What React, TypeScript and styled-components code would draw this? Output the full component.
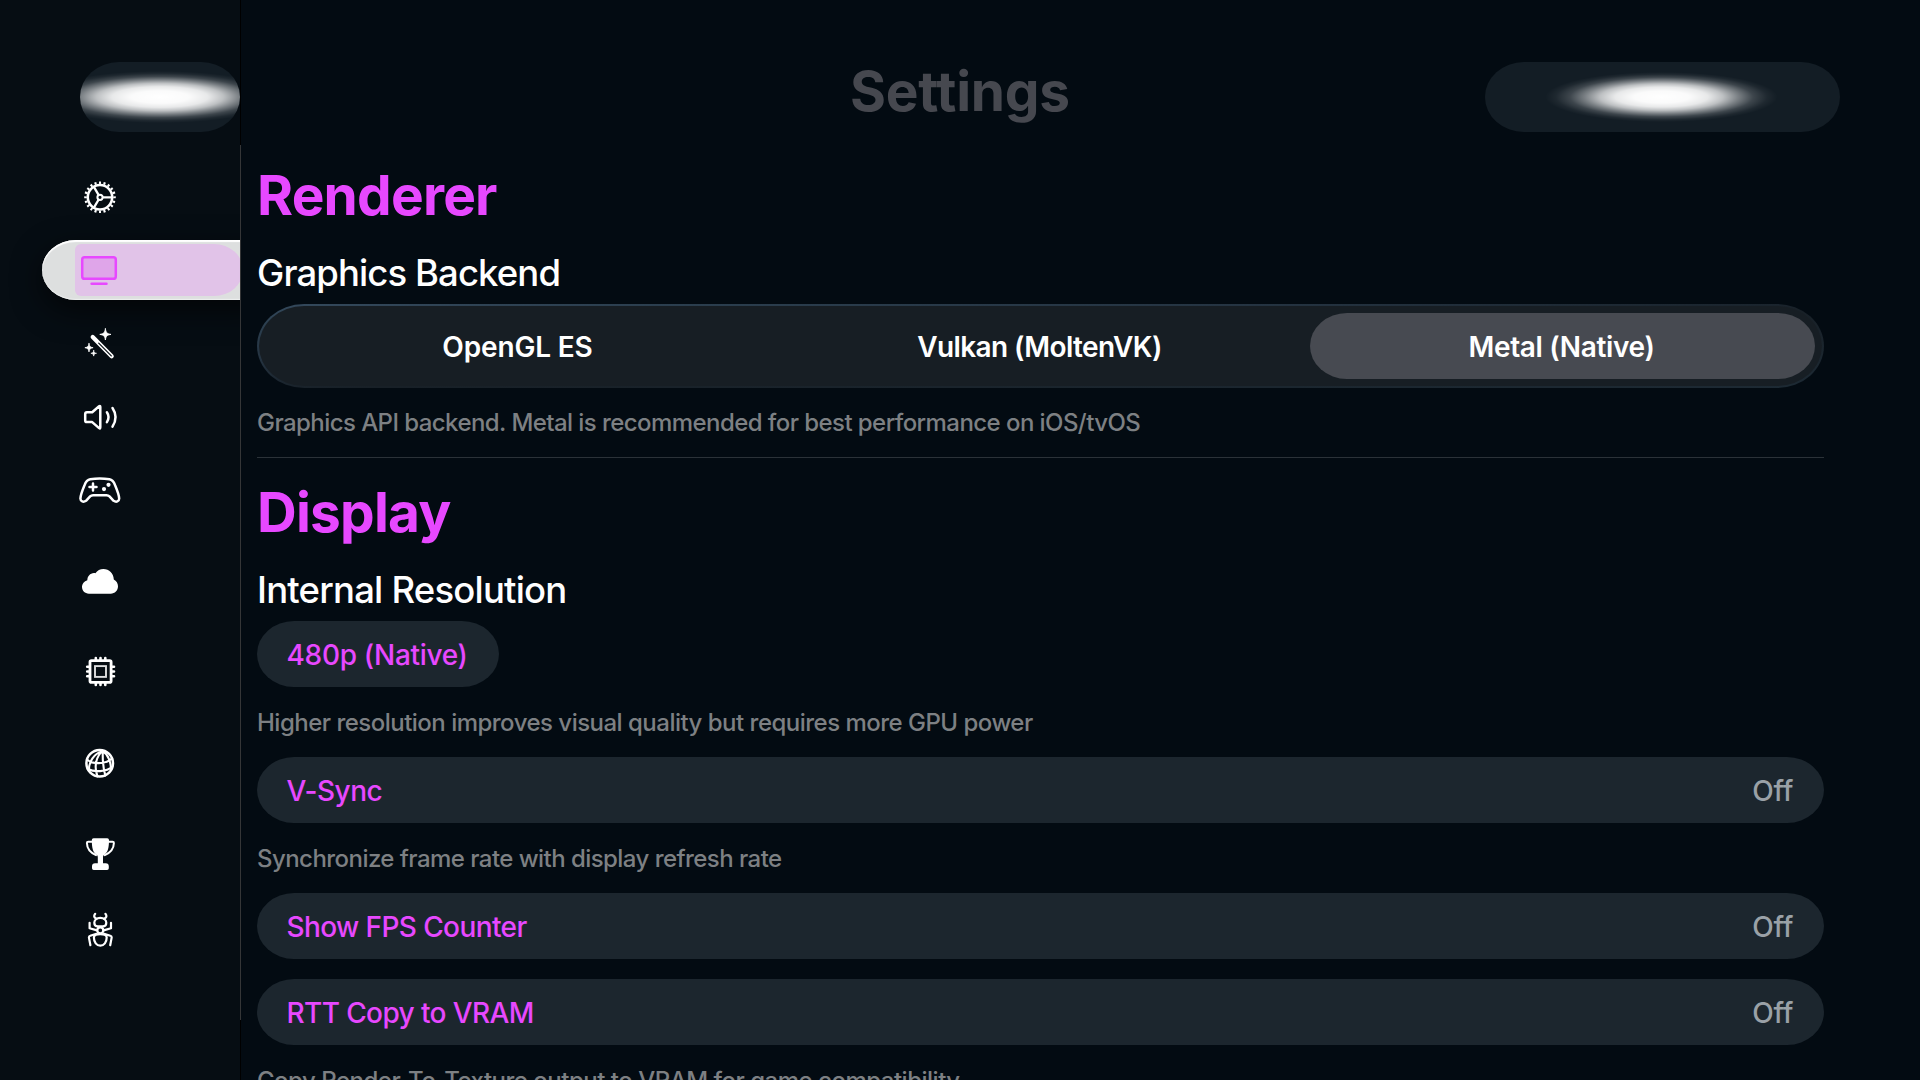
import React from 'react';
import styled, { createGlobalStyle } from 'styled-components';

const ACCENT = '#e748ff';

const GlobalStyle = createGlobalStyle`
  * { box-sizing: border-box; }
  html, body { margin: 0; padding: 0; background: #030b12; overflow: hidden; }
  body { font-family: Inter, "Liberation Sans", sans-serif; color: #fff; }
`;

const Screen = styled.div`
  display: flex;
  width: 1920px;
  height: 1080px;
  overflow: hidden;
  background: #030b12;
`;

const Sidebar = styled.aside`
  flex: none;
  width: 240px;
  height: 100%;
  overflow: hidden;
  background: #060d13;
`;

const SidebarHeader = styled.div`
  height: 167px;
  padding: 62px 0 0 80px;
`;

const GlassPill = styled.div<{ $width: number; $glowX: number; $glowY: number; $shift: number }>`
  flex: none;
  width: ${(p) => p.$width}px;
  height: 70px;
  border-radius: 39px / 35px;
  background:
    radial-gradient(
      ${(p) => p.$glowX}px ${(p) => p.$glowY}px at calc(50% + ${(p) => p.$shift}px) 50%,
      #fff 0%,
      rgba(255, 255, 255, 0.98) 24%,
      rgba(255, 255, 255, 0.9) 40%,
      rgba(255, 255, 255, 0.72) 53%,
      rgba(255, 255, 255, 0.44) 66%,
      rgba(255, 255, 255, 0.18) 79%,
      rgba(255, 255, 255, 0.05) 91%,
      rgba(255, 255, 255, 0) 100%
    ),
    #131d25;
`;

const Nav = styled.nav`
  display: flex;
  flex-direction: column;
`;

const NavItem = styled.div<{ $gap: number }>`
  display: flex;
  align-items: center;
  height: 60px;
  margin-top: ${(p) => p.$gap}px;
  padding-left: 76px;
`;

const SelectedNavItem = styled.div<{ $gap: number }>`
  display: flex;
  height: 60px;
  width: 240px;
  margin-top: ${(p) => p.$gap}px;
  margin-left: 42px;
  padding: 4px 0 4px 33px;
  border-radius: 34px / 30px;
  background: #dddfdf;
  box-shadow: 0 10px 30px rgba(0, 0, 0, 0.65), inset 0 2px 1px #fff, inset 0 -1px 1px #eef0f0;
`;

const SelectedFill = styled.div`
  display: flex;
  align-items: center;
  width: 168px;
  height: 52px;
  padding-left: 1px;
  border-radius: 6px 29px 29px 6px / 6px 26px 26px 6px;
  background: #e1c3e8;
`;

const Glyph = styled.svg`
  flex: none;
  width: 48px;
  height: 60px;
  fill: none;
  stroke: #fff;
  stroke-width: 2.5;
  stroke-linecap: round;
  stroke-linejoin: round;
`;

const SidebarDivider = styled.div`
  flex: none;
  width: 1px;
  height: 100%;
  background: linear-gradient(#000 0 145px, #353637 145px 1020px, #000 1020px);
`;

const Main = styled.main`
  flex: none;
  width: 1679px;
  height: 100%;
  overflow: hidden;
`;

const Header = styled.header`
  display: flex;
  align-items: flex-start;
  justify-content: space-between;
  height: 165px;
  padding: 62px 80px 0 609px;
`;

const PageTitle = styled.h1`
  margin: -1px 0 0;
  font-size: 55px;
  line-height: 60px;
  font-weight: 700;
  letter-spacing: -0.25px;
  color: #46484f;
`;

const Content = styled.div`
  display: flex;
  flex-direction: column;
  align-items: flex-start;
  width: 1583px;
  padding-left: 16px;
`;

const SectionTitle = styled.h2`
  margin: 0 0 26px;
  font-size: 55px;
  line-height: 60px;
  font-weight: 700;
  letter-spacing: -0.8px;
  color: ${ACCENT};
`;

const FieldTitle = styled.h3<{ $tracking: number }>`
  margin: 0 0 9px;
  font-size: 36.5px;
  line-height: 44px;
  font-weight: 500;
  letter-spacing: ${(p) => p.$tracking}px;
`;

const Segmented = styled.div`
  display: grid;
  grid-template-columns: repeat(3, 1fr);
  gap: 17px;
  width: 100%;
  height: 84px;
  padding: 7px 7px;
  margin-bottom: 20px;
  border: 2px solid transparent;
  border-radius: 47px / 42px;
  background:
    linear-gradient(#171e24, #171e24) padding-box,
    linear-gradient(to bottom right, #34495c 0%, #2b3e4e 14%, #253442 32%, #1a242d 49%, #182027 53%, #1d2a34 100%) border-box;
`;

const Segment = styled.div<{ $selected?: boolean; $tracking: number }>`
  display: flex;
  align-items: center;
  justify-content: center;
  padding: 1px 2px 0 0;
  border-radius: 37px / 33px;
  background: ${(p) => (p.$selected ? '#474a51' : 'transparent')};
  font-size: 28px;
  font-weight: 600;
  letter-spacing: ${(p) => p.$tracking}px;
  white-space: nowrap;
`;

const Caption = styled.p<{ $tracking: number }>`
  margin: 0 0 19px;
  font-size: 24px;
  line-height: 30px;
  font-weight: 500;
  letter-spacing: ${(p) => p.$tracking}px;
  color: #7d8083;
  white-space: nowrap;
`;

const Separator = styled.div`
  width: 100%;
  height: 1px;
  margin-bottom: 24px;
  background: #2b3238;
`;

const Control = styled.div<{ $wide?: boolean; $captioned?: boolean }>`
  display: flex;
  flex: none;
  align-items: center;
  justify-content: space-between;
  width: ${(p) => (p.$wide ? '100%' : '242px')};
  height: 66px;
  padding: 1px 31px 0 29.5px;
  margin-bottom: ${(p) => (p.$captioned ? 21 : 20)}px;
  border-radius: 37px / 33px;
  background: #1c262e;
`;

const ControlLabel = styled.span<{ $tracking: number }>`
  font-size: 28px;
  font-weight: 500;
  letter-spacing: ${(p) => p.$tracking}px;
  color: ${ACCENT};
  white-space: nowrap;
`;

const ControlValue = styled.span`
  font-size: 28px;
  font-weight: 500;
  letter-spacing: -0.3px;
  color: #9aa1a7;
`;

const SolidShape = styled.g`
  fill: #fff;
  stroke: none;
`;

const GearIcon = () => (
  <Glyph viewBox="0 0 48 60">
    <circle cx="24" cy="30.3" r="12.2" strokeWidth="2.5" />
    <circle cx="24" cy="30.3" r="14.5" pathLength="40" strokeDasharray="0.9 1.1" strokeDashoffset="0.45" strokeLinecap="butt" strokeWidth="2.6" />
    <circle cx="24" cy="30.3" r="2.6" strokeWidth="2" />
    <path d="M27 30.3H36M22.4 27.6 17.9 19.9M22.4 33 17.9 40.7" strokeWidth="2.3" />
  </Glyph>
);

const DisplayIcon = () => (
  <Glyph viewBox="0 0 48 60">
    <g stroke={ACCENT}>
      <rect x="6.2" y="17.3" width="33.6" height="21.5" rx="2.4" fill="#dfa5e9" />
      <path d="M15.6 43.8H30.5" />
    </g>
  </Glyph>
);

const WandIcon = () => (
  <Glyph viewBox="0 0 48 60">
    <path d="M16.7 22 35.7 41.3" strokeWidth="4.2" />
    <path d="M22.7 28.1 35.3 40.9" stroke="#060d13" strokeWidth="1.2" />
    <SolidShape>
      <path d="M29.4 13.8C29.9 17.6 30.9 18.8 35 19.4 30.9 20 29.9 21.2 29.4 25 28.9 21.2 27.9 20 23.8 19.4 27.9 18.8 28.9 17.6 29.4 13.8Z" strokeWidth="0.9" stroke="#fff" />
      <path d="M13 28.5C13.4 31.4 14.1 32.2 17.1 32.7 14.1 33.2 13.4 34 13 36.9 12.6 34 11.9 33.2 8.9 32.7 11.9 32.2 12.6 31.4 13 28.5Z" strokeWidth="0.8" stroke="#fff" />
      <path d="M17.7 35.5C18 37.5 18.5 38 20.5 38.3 18.5 38.6 18 39.1 17.7 41.1 17.4 39.1 16.9 38.6 14.9 38.3 16.9 38 17.4 37.5 17.7 35.5Z" strokeWidth="0.7" stroke="#fff" />
    </SolidShape>
  </Glyph>
);

const SpeakerIcon = () => (
  <Glyph viewBox="0 0 48 60">
    <path d="M10.9 25.2H16.2L23.1 19.2Q24.3 18.4 24.3 20V40.3Q24.3 42 23.1 41.1L16.2 35.1H10.9Q9.2 35.1 9.2 33.4V26.9Q9.2 25.2 10.9 25.2Z" />
    <path d="M30.9 25.2Q34.2 30.1 30.9 35.1M36.5 21Q42.6 30.1 36.5 39.6" />
  </Glyph>
);

const GamepadIcon = () => (
  <Glyph viewBox="0 0 48 60">
    <path d="M14.2 19.3Q23.8 17.5 33.4 19.3C37 19.9 37.9 22 39.1 25.2 41.1 30 43.1 35 43.2 38.5 43.1 41.5 40.3 42.5 37.6 40.8L33.5 36.4C32.6 35.5 32 35.2 30.5 35.2H17.1C15.6 35.2 15 35.5 14.1 36.4L10 40.8C7.3 42.5 4.5 41.5 4.4 38.5 4.5 35 6.5 30 8.5 25.2 9.7 22 10.6 19.9 14.2 19.3Z" />
    <path d="M17 23.6V30.6M13.5 27.1H20.5" />
    <SolidShape>
      <circle cx="32.5" cy="24.8" r="2.1" />
      <circle cx="28" cy="29.1" r="2.1" />
    </SolidShape>
  </Glyph>
);

const CloudIcon = () => (
  <Glyph viewBox="0 0 48 60">
    <SolidShape>
      <path d="M12.9 41.7C8.9 41.7 6 38.8 6 35.1 6 31.7 8.3 29 11.3 28.2 11.5 24.1 14 21.2 18 21 18.6 21 19 21.1 19.4 21.2 21.3 18.5 24.2 17 27.4 17 33.2 17 37.6 21.4 37.8 27.4 40.4 28.6 42 31.2 42 34.3 42 38.4 38.9 41.7 34.7 41.7Z" />
    </SolidShape>
  </Glyph>
);

const ChipIcon = () => (
  <Glyph viewBox="0 0 48 60">
    <rect x="14" y="18.6" width="21.1" height="21.7" rx="1.4" strokeWidth="2.8" />
    <rect x="19" y="24.1" width="11" height="10.8" strokeWidth="1.9" strokeLinejoin="miter" stroke="#dfe0e1" />
    <path d="M19.8 16V18M24.5 16V18M29.3 16V18M19.8 41V43M24.5 41V43M29.3 41V43M11.2 24.7H13M11.2 29.5H13M11.2 34.3H13M36 24.7H38M36 29.5H38M36 34.3H38" strokeWidth="2.6" />
  </Glyph>
);

const GlobeIcon = () => (
  <Glyph viewBox="0 0 48 60">
    <circle cx="23.7" cy="30.3" r="13.3" />
    <path
      strokeWidth="2.1"
      d="M26 18.5C18 20.5 12.5 29 13 37.8M26.3 18.5C20.5 23 17.5 33 21.5 43.3M26.8 18.5C26.5 26 27.5 36 29.3 42.5M27.3 18.5C31.5 21 35 29 35 36M11 26.5C16 31.5 29.5 31.5 36 25.5M11.8 36C18 39.3 30.5 39 36.3 33.8"
    />
  </Glyph>
);

const TrophyIcon = () => (
  <Glyph viewBox="0 0 48 60">
    <SolidShape>
      <path d="M17.6 14.3H31.2Q33 14.3 33 16C33 24 31.8 28.3 28.3 30.8 27.2 31.6 27 32.5 27 33.8V39.2H29.7Q32.8 39.2 32.8 42.3V44.3Q32.8 46 31.1 46H17.7Q16 46 16 44.3V42.3Q16 39.2 19.1 39.2H21.8V33.8C21.8 32.5 21.6 31.6 20.5 30.8 17 28.3 15.8 24 15.8 16Q15.8 14.3 17.6 14.3Z" />
    </SolidShape>
    <path strokeWidth="2" d="M16.5 17.8H12.2Q10.9 17.8 10.9 19.1C11 24.5 14.5 28.8 20 31.2M32.3 17.8H36.6Q37.9 17.8 37.9 19.1C37.8 24.5 34.3 28.8 28.8 31.2" />
  </Glyph>
);

const AntIcon = () => (
  <Glyph viewBox="0 0 48 60">
    <g strokeWidth="2.2">
      <path d="M24.3 17.8C27.8 17.8 30.3 20 30.3 22.8 30.3 25.2 28.6 26.4 26.8 26.4H21.8C20 26.4 18.3 25.2 18.3 22.8 18.3 20 20.8 17.8 24.3 17.8Z" />
      <circle cx="24.3" cy="30.3" r="3" />
      <path d="M24.3 34.1C28 34.1 30.7 34.8 30.7 37.6 30.7 42.2 28 45.7 24.3 45.7 20.6 45.7 17.9 42.2 17.9 37.6 17.9 34.8 20.6 34.1 24.3 34.1Z" />
      <path d="M19.2 13.8Q16.6 17 20.5 18.8M29.4 13.8Q32 17 28.1 18.8" />
      <path d="M13.6 22.8V28.3L21 30.4M35 22.8V28.3L27.6 30.4" />
      <path d="M14.4 45.2 12.9 37.4Q12.9 36 14.2 35.7L20.5 33.9M34.2 45.2 35.7 37.4Q35.7 36 34.4 35.7L28.1 33.9" />
    </g>
  </Glyph>
);

export default function App() {
  return (
    <>
      <GlobalStyle />
      <Screen>
        <Sidebar>
          <SidebarHeader>
            <GlassPill $width={160} $glowX={120} $glowY={26} $shift={0} />
          </SidebarHeader>
          <Nav>
            <NavItem $gap={0}><GearIcon /></NavItem>
            <SelectedNavItem $gap={13}>
              <SelectedFill><DisplayIcon /></SelectedFill>
            </SelectedNavItem>
            <NavItem $gap={15}><WandIcon /></NavItem>
            <NavItem $gap={12}><SpeakerIcon /></NavItem>
            <NavItem $gap={13}><GamepadIcon /></NavItem>
            <NavItem $gap={32}><CloudIcon /></NavItem>
            <NavItem $gap={30}><ChipIcon /></NavItem>
            <NavItem $gap={31}><GlobeIcon /></NavItem>
            <NavItem $gap={31}><TrophyIcon /></NavItem>
            <NavItem $gap={16}><AntIcon /></NavItem>
          </Nav>
        </Sidebar>
        <SidebarDivider />
        <Main>
          <Header>
            <PageTitle>Settings</PageTitle>
            <GlassPill $width={355} $glowX={116} $glowY={25} $shift={-1} />
          </Header>
          <Content>
            <SectionTitle>Renderer</SectionTitle>
            <FieldTitle $tracking={-0.9}>Graphics Backend</FieldTitle>
            <Segmented>
              <Segment $tracking={-0.15}>OpenGL ES</Segment>
              <Segment $tracking={-0.6}>Vulkan (MoltenVK)</Segment>
              <Segment $selected $tracking={-0.33}>Metal (Native)</Segment>
            </Segmented>
            <Caption $tracking={-0.565}>
              Graphics API backend. Metal is recommended for best performance on iOS/tvOS
            </Caption>
            <Separator />
            <SectionTitle>Display</SectionTitle>
            <FieldTitle $tracking={-0.8}>Internal Resolution</FieldTitle>
            <Control $captioned>
              <ControlLabel $tracking={-0.3}>480p (Native)</ControlLabel>
            </Control>
            <Caption $tracking={-0.513}>
              Higher resolution improves visual quality but requires more GPU power
            </Caption>
            <Control $wide $captioned>
              <ControlLabel $tracking={-0.45}>V-Sync</ControlLabel>
              <ControlValue>Off</ControlValue>
            </Control>
            <Caption $tracking={-0.55}>Synchronize frame rate with display refresh rate</Caption>
            <Control $wide>
              <ControlLabel $tracking={-0.6}>Show FPS Counter</ControlLabel>
              <ControlValue>Off</ControlValue>
            </Control>
            <Control $wide $captioned>
              <ControlLabel $tracking={-0.62}>RTT Copy to VRAM</ControlLabel>
              <ControlValue>Off</ControlValue>
            </Control>
            <Caption $tracking={-0.495}>
              Copy Render-To-Texture output to VRAM for game compatibility
            </Caption>
          </Content>
        </Main>
      </Screen>
    </>
  );
}
